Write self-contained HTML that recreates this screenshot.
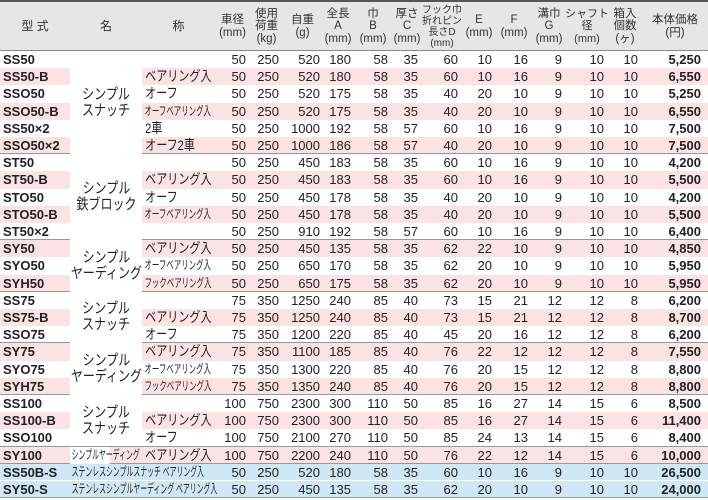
<!DOCTYPE html><html><head><meta charset="utf-8"><style>
*{margin:0;padding:0;box-sizing:border-box}
body{width:708px;height:500px;background:#fff;font-family:"Liberation Sans","Noto Sans CJK JP",sans-serif;color:#222;position:relative;overflow:hidden}
.hd{position:absolute;left:0;top:0;width:708px;height:51px;background:#e6e6e6;border-top:2px solid #555;border-bottom:1px solid #888}
.hd div{position:absolute;top:0;height:49px;display:flex;align-items:center;justify-content:center;text-align:center;font-size:11.5px;line-height:12.5px;color:#333;white-space:nowrap}
.r{position:absolute;left:0;width:708px;height:17.2px;display:grid;grid-template-columns:70px 72px 73px 35px 33px 39px 32px 38px 30px 40px 34px 36px 34px 42px 34px 66px;font-size:13px;line-height:17px}
.r span{text-align:right;padding-right:4px;white-space:nowrap}
.r span:nth-child(1){text-align:left;padding-left:3px;font-weight:bold}
.r span:nth-child(2){background:#fff}
.r span:nth-child(3){text-align:left;padding-left:4px;font-size:14px;transform:scaleX(.79);transform-origin:left center}
.r span:nth-child(3).sm{font-size:12px;transform:scaleX(.62)}
.r span:nth-child(6){padding-right:2px}
.r span:nth-child(7){padding-right:3px}
.r span:nth-child(16){font-weight:bold;padding-right:7px}
.p{background:#fbe3e5}
.b{background:#cfe8f6}
.b span:nth-child(2){background:transparent}
.s{border-bottom:1px solid #999}
.nm{position:absolute;left:70px;width:72px;display:flex;align-items:center;justify-content:center;text-align:center;font-size:15px;line-height:16px;background:#fff;white-space:nowrap}
.nm b{font-weight:normal;display:block;flex-shrink:0;transform:scaleX(.8)}
.ov{font-size:12.5px !important;text-align:left !important;padding-left:3px !important;transform:scaleX(.55);transform-origin:left center;overflow:visible}
</style></head><body>
<div class="hd">
<div style="left:0;width:70px;font-size:12px">型 式</div>
<div style="left:70px;width:72px;font-size:12px">名</div>
<div style="left:142px;width:73px;font-size:12px">称</div>
<div style="left:215px;width:35px">車径<br>(mm)</div>
<div style="left:250px;width:33px">使用<br>荷重<br>(kg)</div>
<div style="left:283px;width:39px">自重<br>(g)</div>
<div style="left:322px;width:32px">全長<br>A<br>(mm)</div>
<div style="left:354px;width:38px">巾<br>B<br>(mm)</div>
<div style="left:392px;width:30px">厚さ<br>C<br>(mm)</div>
<div style="left:422px;width:40px;font-size:10px;line-height:11px">フック巾<br>折れピン<br>長さD<br>(mm)</div>
<div style="left:462px;width:34px">E<br>(mm)</div>
<div style="left:496px;width:36px">F<br>(mm)</div>
<div style="left:532px;width:34px">溝巾<br>G<br>(mm)</div>
<div style="left:566px;width:42px;font-size:11px">シャフト<br>径<br>(mm)</div>
<div style="left:608px;width:34px">箱入<br>個数<br>(ヶ)</div>
<div style="left:642px;width:66px">本体価格<br>(円)</div>
</div>
<div class="r" style="top:51px"><span>SS50</span><span></span><span></span><span>50</span><span>250</span><span>520</span><span>180</span><span>58</span><span>35</span><span>60</span><span>10</span><span>16</span><span>9</span><span>10</span><span>10</span><span>5,250</span></div>
<div class="r p" style="top:68.2px"><span>SS50-B</span><span></span><span>ベアリング入</span><span>50</span><span>250</span><span>520</span><span>180</span><span>58</span><span>35</span><span>60</span><span>10</span><span>16</span><span>9</span><span>10</span><span>10</span><span>6,550</span></div>
<div class="r" style="top:85.4px"><span>SSO50</span><span></span><span>オーフ</span><span>50</span><span>250</span><span>520</span><span>175</span><span>58</span><span>35</span><span>40</span><span>20</span><span>10</span><span>9</span><span>10</span><span>10</span><span>5,250</span></div>
<div class="r p" style="top:102.6px"><span>SSO50-B</span><span></span><span class="sm">オーフベアリング入</span><span>50</span><span>250</span><span>520</span><span>175</span><span>58</span><span>35</span><span>40</span><span>20</span><span>10</span><span>9</span><span>10</span><span>10</span><span>6,550</span></div>
<div class="r" style="top:119.8px"><span>SS50×2</span><span></span><span>2車</span><span>50</span><span>250</span><span>1000</span><span>192</span><span>58</span><span>57</span><span>60</span><span>10</span><span>16</span><span>9</span><span>10</span><span>10</span><span>7,500</span></div>
<div class="r p s" style="top:137px"><span>SSO50×2</span><span></span><span>オーフ2車</span><span>50</span><span>250</span><span>1000</span><span>186</span><span>58</span><span>57</span><span>40</span><span>20</span><span>10</span><span>9</span><span>10</span><span>10</span><span>7,500</span></div>
<div class="r" style="top:154.2px"><span>ST50</span><span></span><span></span><span>50</span><span>250</span><span>450</span><span>183</span><span>58</span><span>35</span><span>60</span><span>10</span><span>16</span><span>9</span><span>10</span><span>10</span><span>4,200</span></div>
<div class="r p" style="top:171.4px"><span>ST50-B</span><span></span><span>ベアリング入</span><span>50</span><span>250</span><span>450</span><span>183</span><span>58</span><span>35</span><span>60</span><span>10</span><span>16</span><span>9</span><span>10</span><span>10</span><span>5,500</span></div>
<div class="r" style="top:188.6px"><span>STO50</span><span></span><span>オーフ</span><span>50</span><span>250</span><span>450</span><span>178</span><span>58</span><span>35</span><span>40</span><span>20</span><span>10</span><span>9</span><span>10</span><span>10</span><span>4,200</span></div>
<div class="r p" style="top:205.8px"><span>STO50-B</span><span></span><span class="sm">オーフベアリング入</span><span>50</span><span>250</span><span>450</span><span>178</span><span>58</span><span>35</span><span>40</span><span>20</span><span>10</span><span>9</span><span>10</span><span>10</span><span>5,500</span></div>
<div class="r s" style="top:223px"><span>ST50×2</span><span></span><span></span><span>50</span><span>250</span><span>910</span><span>192</span><span>58</span><span>57</span><span>60</span><span>10</span><span>16</span><span>9</span><span>10</span><span>10</span><span>6,400</span></div>
<div class="r p" style="top:240.2px"><span>SY50</span><span></span><span>ベアリング入</span><span>50</span><span>250</span><span>450</span><span>135</span><span>58</span><span>35</span><span>62</span><span>22</span><span>10</span><span>9</span><span>10</span><span>10</span><span>4,850</span></div>
<div class="r" style="top:257.4px"><span>SYO50</span><span></span><span class="sm">オーフベアリング入</span><span>50</span><span>250</span><span>650</span><span>170</span><span>58</span><span>35</span><span>62</span><span>20</span><span>10</span><span>9</span><span>10</span><span>10</span><span>5,950</span></div>
<div class="r p s" style="top:274.6px"><span>SYH50</span><span></span><span class="sm">フックベアリング入</span><span>50</span><span>250</span><span>650</span><span>175</span><span>58</span><span>35</span><span>62</span><span>20</span><span>10</span><span>9</span><span>10</span><span>10</span><span>5,950</span></div>
<div class="r" style="top:291.8px"><span>SS75</span><span></span><span></span><span>75</span><span>350</span><span>1250</span><span>240</span><span>85</span><span>40</span><span>73</span><span>15</span><span>21</span><span>12</span><span>12</span><span>8</span><span>6,200</span></div>
<div class="r p" style="top:309px"><span>SS75-B</span><span></span><span>ベアリング入</span><span>75</span><span>350</span><span>1250</span><span>240</span><span>85</span><span>40</span><span>73</span><span>15</span><span>21</span><span>12</span><span>12</span><span>8</span><span>8,700</span></div>
<div class="r s" style="top:326.2px"><span>SSO75</span><span></span><span>オーフ</span><span>75</span><span>350</span><span>1200</span><span>220</span><span>85</span><span>40</span><span>45</span><span>20</span><span>16</span><span>12</span><span>12</span><span>8</span><span>6,200</span></div>
<div class="r p" style="top:343.4px"><span>SY75</span><span></span><span>ベアリング入</span><span>75</span><span>350</span><span>1100</span><span>185</span><span>85</span><span>40</span><span>76</span><span>22</span><span>12</span><span>12</span><span>12</span><span>8</span><span>7,550</span></div>
<div class="r" style="top:360.6px"><span>SYO75</span><span></span><span class="sm">オーフベアリング入</span><span>75</span><span>350</span><span>1300</span><span>220</span><span>85</span><span>40</span><span>76</span><span>20</span><span>15</span><span>12</span><span>12</span><span>8</span><span>8,800</span></div>
<div class="r p s" style="top:377.8px"><span>SYH75</span><span></span><span class="sm">フックベアリング入</span><span>75</span><span>350</span><span>1350</span><span>240</span><span>85</span><span>40</span><span>76</span><span>20</span><span>15</span><span>12</span><span>12</span><span>8</span><span>8,800</span></div>
<div class="r" style="top:395px"><span>SS100</span><span></span><span></span><span>100</span><span>750</span><span>2300</span><span>300</span><span>110</span><span>50</span><span>85</span><span>16</span><span>27</span><span>14</span><span>15</span><span>6</span><span>8,500</span></div>
<div class="r p" style="top:412.2px"><span>SS100-B</span><span></span><span>ベアリング入</span><span>100</span><span>750</span><span>2300</span><span>300</span><span>110</span><span>50</span><span>85</span><span>16</span><span>27</span><span>14</span><span>15</span><span>6</span><span>11,400</span></div>
<div class="r s" style="top:429.4px"><span>SSO100</span><span></span><span>オーフ</span><span>100</span><span>750</span><span>2100</span><span>270</span><span>110</span><span>50</span><span>85</span><span>24</span><span>13</span><span>14</span><span>15</span><span>6</span><span>8,400</span></div>
<div class="r p s" style="top:446.6px"><span>SY100</span><span class="ov" style="background:#fff">シンプルヤーディング</span><span>ベアリング入</span><span>100</span><span>750</span><span>2200</span><span>240</span><span>110</span><span>50</span><span>76</span><span>22</span><span>12</span><span>14</span><span>15</span><span>6</span><span>10,000</span></div>
<div class="r b" style="top:463.8px;border-bottom:1px solid #fff"><span>SS50B-S</span><span class="ov">ステンレスシンプルスナッチ ベアリング入</span><span></span><span>50</span><span>250</span><span>520</span><span>180</span><span>58</span><span>35</span><span>60</span><span>10</span><span>16</span><span>9</span><span>10</span><span>10</span><span>26,500</span></div>
<div class="r b" style="top:481px;border-bottom:1px solid #999"><span>SY50-S</span><span class="ov">ステンレスシンプルヤーディング ベアリング入</span><span></span><span>50</span><span>250</span><span>450</span><span>135</span><span>58</span><span>35</span><span>62</span><span>20</span><span>10</span><span>9</span><span>10</span><span>10</span><span>24,000</span></div>
<div class="nm" style="top:51px;height:103px"><b>シンプル<br>スナッチ</b></div>
<div class="nm" style="top:154.2px;height:85px"><b>シンプル<br>鉄ブロック</b></div>
<div class="nm" style="top:240.2px;height:51px"><b>シンプル<br>ヤーディング</b></div>
<div class="nm" style="top:291.8px;height:51px"><b>シンプル<br>スナッチ</b></div>
<div class="nm" style="top:343.4px;height:51px"><b>シンプル<br>ヤーディング</b></div>
<div class="nm" style="top:395px;height:51px"><b>シンプル<br>スナッチ</b></div>
</body></html>
